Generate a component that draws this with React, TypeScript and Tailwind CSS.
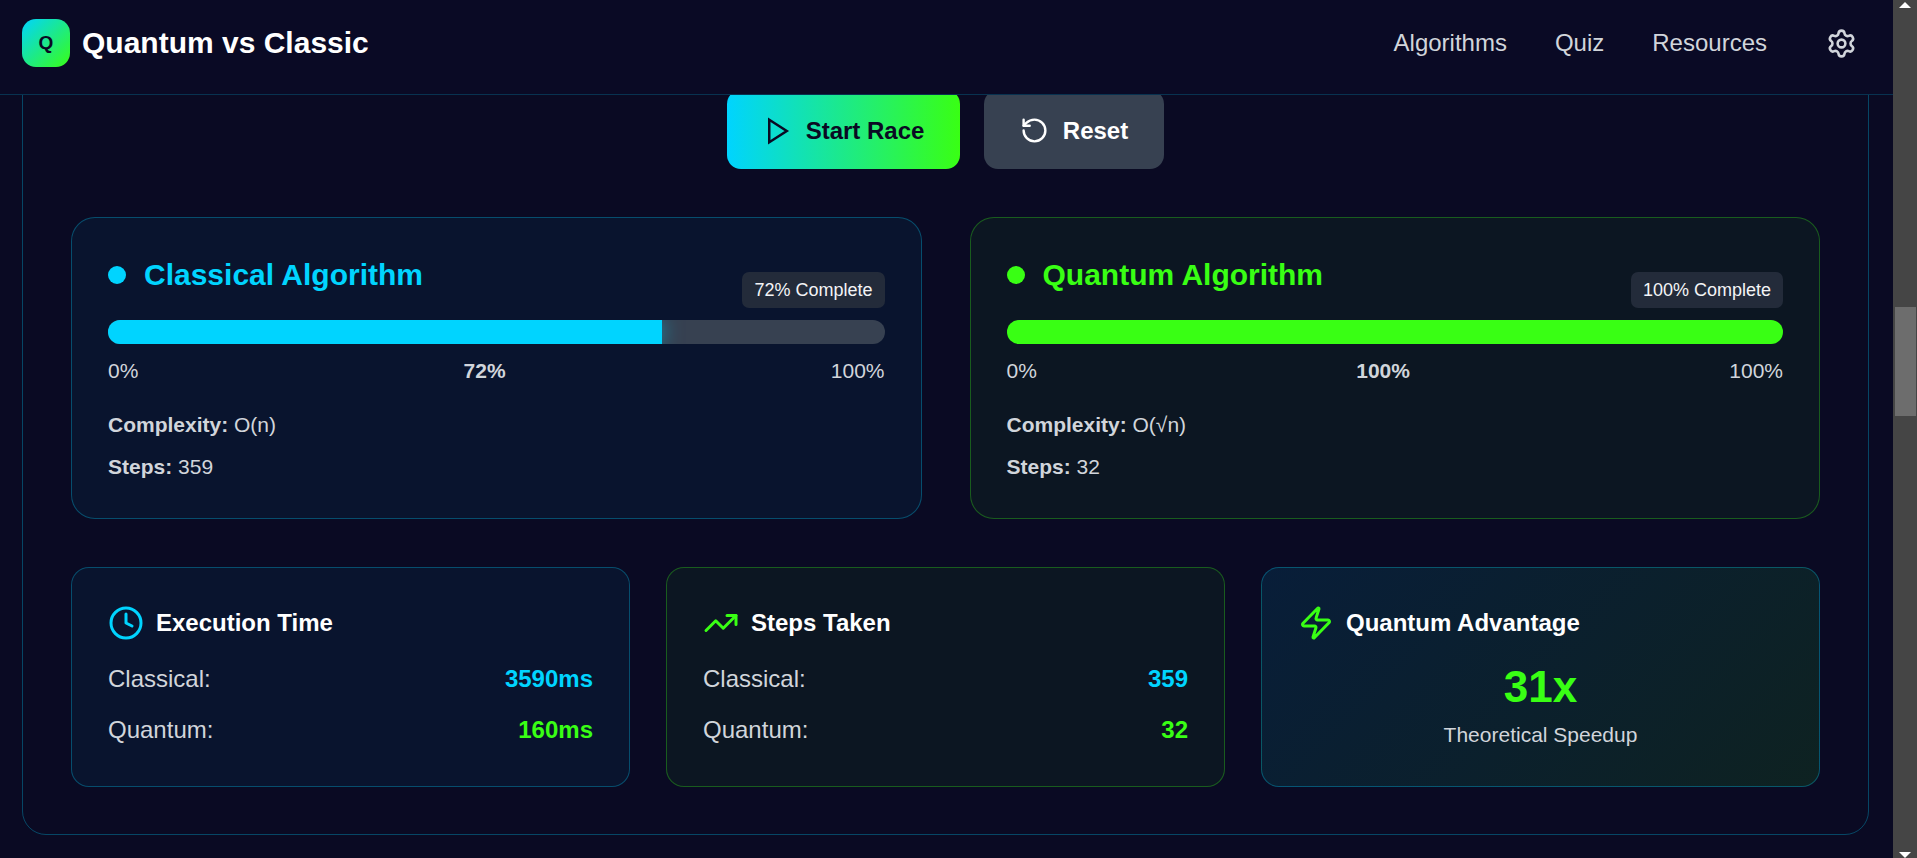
import { Clock, RotateCcw, Settings, TrendingUp, Zap } from 'lucide-react'
import type { ReactNode } from 'react'

const CYAN_CARD = 'border-[#00d4ff]/30 bg-[#00d4ff]/5'
const GREEN_CARD = 'border-[#39ff14]/30 bg-[#39ff14]/5'

type AlgorithmCardProps = {
  title: string
  percent: number
  complexity: string
  steps: number
  cardClass: string
  dotClass: string
  titleClass: string
  fillClass: string
}

function AlgorithmCard({ title, percent, complexity, steps, cardClass, dotClass, titleClass, fillClass }: AlgorithmCardProps) {
  return (
    <section className={`relative rounded-[24px] border p-[36px] ${cardClass}`}>
      <div className="mb-[24px] flex h-[42px] items-center gap-[18px]">
        <span className={`h-[18px] w-[18px] rounded-full ${dotClass}`} />
        <h2 className={`-mt-[2px] text-[30px] font-bold ${titleClass}`}>{title}</h2>
      </div>
      <div className="absolute right-[36px] top-[54px] rounded-[7px] bg-[#232b3a] px-[12px] py-0 text-[18px] leading-[36px] text-[#f3f4f6]">
        {percent}% Complete
      </div>
      <div className="h-[24px] overflow-hidden rounded-full bg-[#374151]">
        <div className={`h-full ${fillClass}`} />
      </div>
      <div className="mt-[12px] flex justify-between text-[21px] leading-[30px] text-[#d1d5db]">
        <span>0%</span>
        <span className="font-bold">{percent}%</span>
        <span>100%</span>
      </div>
      <div className="mt-[24px] flex flex-col gap-[12px] text-[21px] leading-[30px] text-[#d1d5db]">
        <div>
          <b>Complexity:</b> {complexity}
        </div>
        <div>
          <b>Steps:</b> {steps}
        </div>
      </div>
    </section>
  )
}

function StatCard({ icon, title, className, children }: { icon: ReactNode; title: string; className: string; children: ReactNode }) {
  return (
    <section className={`rounded-[18px] border p-[36px] ${className}`}>
      <div className="flex h-[37px] items-center gap-[12px]">
        {icon}
        <h3 className="text-[24px] font-bold text-white">{title}</h3>
      </div>
      {children}
    </section>
  )
}

function CompareRows({ classical, quantum }: { classical: string; quantum: string }) {
  return (
    <div className="mt-[20px] flex flex-col gap-[15px] text-[24px] leading-[36px]">
      <div className="flex justify-between">
        <span className="text-[#d1d5db]">Classical:</span>
        <span className="font-bold text-[#00d4ff]">{classical}</span>
      </div>
      <div className="flex justify-between">
        <span className="text-[#d1d5db]">Quantum:</span>
        <span className="font-bold text-[#39ff14]">{quantum}</span>
      </div>
    </div>
  )
}

function Scrollbar() {
  return (
    <div className="flex h-full w-[24px] shrink-0 flex-col items-center overflow-hidden bg-[#454545]">
      <span className="mt-[2px] h-0 w-0 border-x-[6px] border-b-[6px] border-x-transparent border-b-white" />
      <span className="ml-[1px] mt-[299px] h-[111px] w-[21px] bg-[#6d6d6d]" />
      <span className="mt-[436px] h-0 w-0 border-x-[6px] border-t-[6px] border-x-transparent border-t-white" />
    </div>
  )
}

export default function App() {
  return (
    <div className="flex h-screen overflow-hidden bg-[#0a0a23] font-['Liberation_Sans',Arial,sans-serif] text-white">
      <div className="flex min-w-0 flex-1 flex-col">
        <header className="flex h-[95px] shrink-0 items-start justify-between border-b border-[#00d4ff]/20 bg-[#0a0a25] pl-[22px] pr-[25px] pt-[19px]">
          <div className="flex items-center gap-[12px]">
            <div className="flex h-[48px] w-[48px] items-center justify-center rounded-[14px] bg-linear-[135deg,#00d4ff,#39ff14] text-[19px] font-bold text-[#0a0a23]">
              Q
            </div>
            <h1 className="-mt-[2px] text-[30px] font-bold">Quantum vs Classic</h1>
          </div>
          <nav className="flex h-[48px] items-center gap-[48px] text-[24px] text-[#d1d5db]">
            <a>Algorithms</a>
            <a>Quiz</a>
            <a>Resources</a>
            <button className="p-[11px] text-[#d1d5db]">
              <Settings size={31} />
            </button>
          </nav>
        </header>

        <main className="min-h-0 flex-1 overflow-hidden pl-[22px] pr-[24px]">
          <div className="-mt-[54px] rounded-[24px] border border-[#00d4ff]/30 px-[48px] pb-[47px] pt-[48px]">
            <div className="flex justify-center gap-[24px]">
              <button className="flex h-[79px] w-[233px] items-center justify-center gap-[13px] rounded-[14px] bg-linear-[90deg,#00d4ff,#39ff14] pt-[2px] text-[24px] font-bold text-[#0a0a23]">
                <svg width="30" height="30" viewBox="0 0 24 24" fill="none" stroke="currentColor" strokeWidth="2">
                  <polygon points="5 3 19 12 5 21 5 3" />
                </svg>
                Start Race
              </button>
              <button className="flex h-[79px] w-[180px] items-center justify-center gap-[14px] rounded-[14px] bg-[#374151] pt-[2px] text-[24px] font-bold text-white">
                <RotateCcw size={29} />
                Reset
              </button>
            </div>

            <div className="mt-[48px] grid grid-cols-2 gap-[48px]">
              <AlgorithmCard
                title="Classical Algorithm"
                percent={72}
                complexity="O(n)"
                steps={359}
                cardClass={CYAN_CARD}
                dotClass="bg-[#00d4ff]"
                titleClass="text-[#00d4ff]"
                fillClass="w-[71.3%] bg-[#00d4ff] shadow-[0_0_20px_rgba(0,212,255,0.5)]"
              />
              <AlgorithmCard
                title="Quantum Algorithm"
                percent={100}
                complexity="O(√n)"
                steps={32}
                cardClass={GREEN_CARD}
                dotClass="bg-[#39ff14]"
                titleClass="text-[#39ff14]"
                fillClass="w-full bg-[#39ff14]"
              />
            </div>

            <div className="mt-[48px] grid grid-cols-3 gap-[36px]">
              <StatCard icon={<Clock size={36} className="text-[#00d4ff]" />} title="Execution Time" className={CYAN_CARD}>
                <CompareRows classical="3590ms" quantum="160ms" />
              </StatCard>
              <StatCard icon={<TrendingUp size={36} className="text-[#39ff14]" />} title="Steps Taken" className={GREEN_CARD}>
                <CompareRows classical="359" quantum="32" />
              </StatCard>
              <StatCard
                icon={<Zap size={36} className="text-[#39ff14]" />}
                title="Quantum Advantage"
                className="border-[#00d4ff]/30 bg-linear-[135deg,rgba(0,212,255,0.1),rgba(57,255,20,0.1)]"
              >
                <div className="mt-[20px] text-center text-[44px] font-bold leading-[52px] text-[#39ff14]">31x</div>
                <div className="mt-[7px] text-center text-[21px] leading-[30px] text-[#d1d5db]">Theoretical Speedup</div>
              </StatCard>
            </div>
          </div>
        </main>
      </div>
      <Scrollbar />
    </div>
  )
}
